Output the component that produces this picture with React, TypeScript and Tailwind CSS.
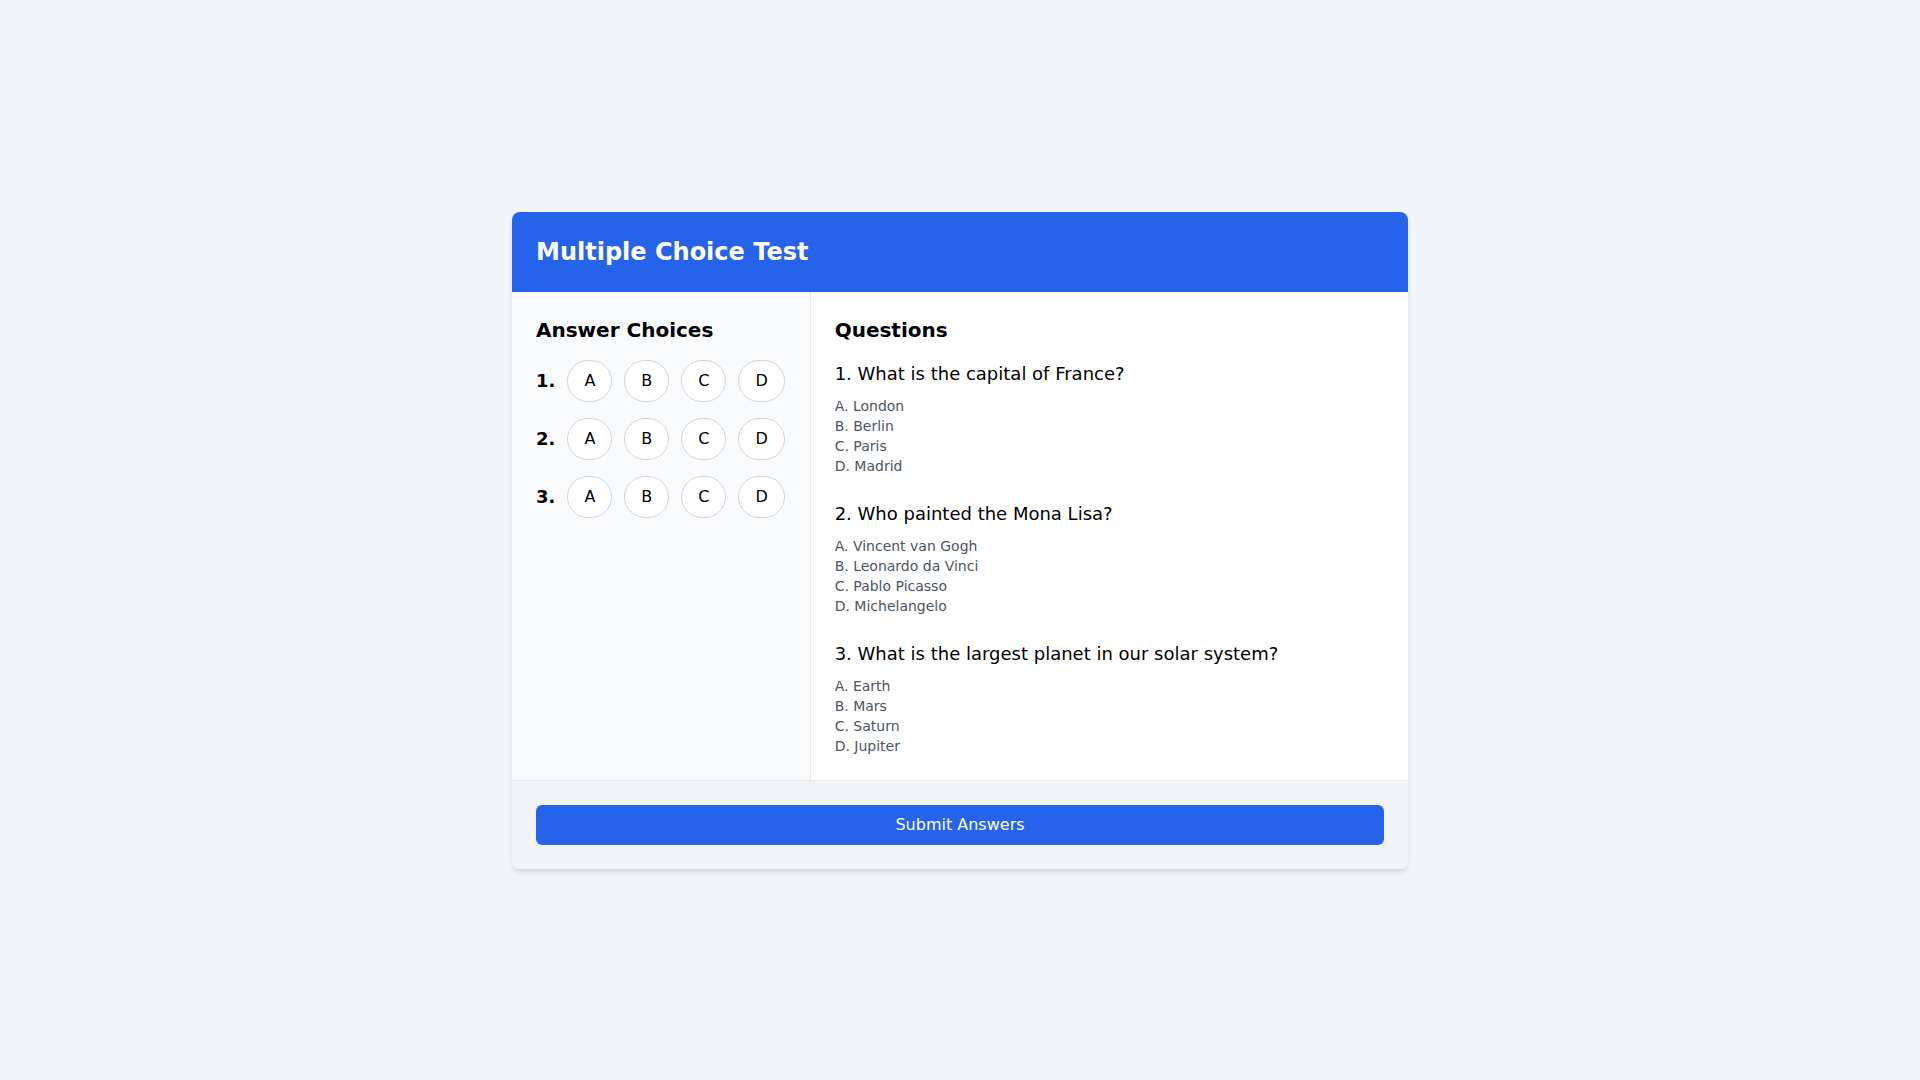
const questions = [
  {
    q: "What is the capital of France?",
    options: ["London", "Berlin", "Paris", "Madrid"],
  },
  {
    q: "Who painted the Mona Lisa?",
    options: ["Vincent van Gogh", "Leonardo da Vinci", "Pablo Picasso", "Michelangelo"],
  },
  {
    q: "What is the largest planet in our solar system?",
    options: ["Earth", "Mars", "Saturn", "Jupiter"],
  },
];

const letters = ["A", "B", "C", "D"];

export default function App() {
  return (
    <div className="min-h-screen bg-[#f3f4f6] flex items-center justify-center font-['DejaVu_Sans',sans-serif] text-black">
      <div className="w-full max-w-4xl bg-white rounded-lg shadow-md overflow-hidden">
        <div className="bg-[#2563eb] p-6">
          <h1 className="text-2xl font-bold text-white">Multiple Choice Test</h1>
        </div>

        <div className="flex">
          <div className="w-1/3 bg-[#f9fafb] border-r border-[#e5e7eb] p-6">
            <h2 className="text-xl font-bold mb-4">Answer Choices</h2>
            <div className="space-y-4">
              {questions.map((_, i) => (
                <div key={i} className="flex items-center gap-3">
                  <span className="text-lg font-bold">{i + 1}.</span>
                  {letters.map((l) => (
                    <button
                      key={l}
                      type="button"
                      className="px-4 py-2 rounded-full border border-[#d1d5db] bg-white text-base"
                    >
                      {l}
                    </button>
                  ))}
                </div>
              ))}
            </div>
          </div>

          <div className="w-2/3 p-6">
            <h2 className="text-xl font-bold mb-4">Questions</h2>
            <div className="space-y-6">
              {questions.map((item, i) => (
                <div key={i}>
                  <p className="text-lg mb-2">
                    {i + 1}. {item.q}
                  </p>
                  <ul className="text-sm text-[#4b5563]">
                    {item.options.map((opt, j) => (
                      <li key={j}>
                        {letters[j]}. {opt}
                      </li>
                    ))}
                  </ul>
                </div>
              ))}
            </div>
          </div>
        </div>

        <div className="bg-[#f3f4f6] border-t border-[#e5e7eb] p-6">
          <button
            type="button"
            className="w-full bg-[#2563eb] text-white py-2 rounded-md text-base"
          >
            Submit Answers
          </button>
        </div>
      </div>
    </div>
  );
}
